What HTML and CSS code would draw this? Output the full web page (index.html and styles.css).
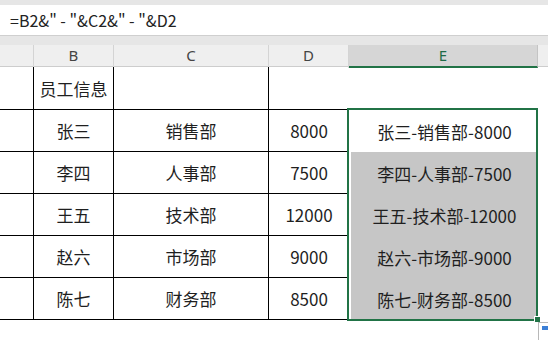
FILE: index.html
```html
<!DOCTYPE html>
<html lang="zh-CN">
<head>
<meta charset="utf-8">
<link rel="stylesheet" href="styles.css">
</head>
<body>
<div class="app">
  <div class="topband"></div>
  <div class="formula">=B2&amp;" - "&amp;C2&amp;" - "&amp;D2</div>
  <div class="gap"></div>
  <div class="colhead">
    <div class="ch"></div>
    <div class="ch">B</div>
    <div class="ch">C</div>
    <div class="ch">D</div>
    <div class="ch ch-sel">E</div>
    <div class="ch ch-last"></div>
  </div>
  <div class="sheet">
    <div class="c b"></div><div class="c b">员工信息</div><div class="c b"></div><div class="c bl"></div><div class="c"></div><div class="c"></div>
    <div class="c b"></div><div class="c b">张三</div><div class="c b">销售部</div><div class="c bl">8000</div><div class="c e">张三-销售部-8000</div><div class="c"></div>
    <div class="c b"></div><div class="c b">李四</div><div class="c b">人事部</div><div class="c bl">7500</div><div class="c e g">李四-人事部-7500</div><div class="c"></div>
    <div class="c b"></div><div class="c b">王五</div><div class="c b">技术部</div><div class="c bl">12000</div><div class="c e g">王五-技术部-12000</div><div class="c"></div>
    <div class="c b"></div><div class="c b">赵六</div><div class="c b">市场部</div><div class="c bl">9000</div><div class="c e g">赵六-市场部-9000</div><div class="c"></div>
    <div class="c b"></div><div class="c b">陈七</div><div class="c b">财务部</div><div class="c bl">8500</div><div class="c e g">陈七-财务部-8500</div><div class="c"></div>
    <div class="selection"></div>
    <div class="handle"></div>
    <div class="quick"><span class="qbar"></span></div>
  </div>
</div>
</body>
</html>
```

FILE: styles.css
```css
* { box-sizing: border-box; }
html, body { margin: 0; padding: 0; background: #fff; }
body { width: 548px; height: 340px; overflow: hidden; font-family: "Noto Sans CJK SC", "Noto Sans", sans-serif; color: #1f1f1f; }
.app { width: 548px; }
.topband { height: 5px; background: #e6e6e6; }
.formula { height: 31px; line-height: 30px; padding-left: 10px; font-size: 16px; background: #fff; border-bottom: 1px solid #cfcfcf; color: #222; }
.gap { height: 9px; background: #e6e6e6; }
.colhead { display: grid; grid-template-columns: 34px 80px 155px 80px 189px 1fr; height: 22px; background: #efefef; border-bottom: 1px solid #cdcdcd; }
.ch { border-right: 1px solid #d4d4d4; text-align: center; font-size: 15px; line-height: 21px; color: #444; font-family: "Noto Sans", "Liberation Sans", sans-serif; }
.ch-sel { background: #d6d6d6; color: #1e6b47; border-bottom: 2px solid #217346; border-right-color: #c4c4c4; }
.ch-last { border-right: none; }
.sheet { position: relative; display: grid; grid-template-columns: 34px 80px 155px 80px 189px 1fr; grid-template-rows: 43px repeat(5, 42px); }
.c { display: flex; align-items: center; justify-content: center; font-size: 17px; white-space: nowrap; }
.b { border-right: 1px solid #000; border-bottom: 1px solid #000; }
.bl { border-bottom: 1px solid #000; }
.e { margin-left: 2px; }
.g { background: #c6c6c6; }
.selection { position: absolute; left: 347px; top: 41px; width: 191px; height: 213px; border: 2px solid #217346; pointer-events: none; }
.handle { position: absolute; left: 534px; top: 249px; width: 7px; height: 7px; background: #217346; border: 1px solid #fff; }
.quick { position: absolute; left: 538px; top: 255px; width: 14px; height: 20px; background: #fff; border: 1px solid #b8b8b8; padding: 3px 0 0 3px; }
.qbar { display: block; width: 10px; height: 4px; background: #3b7fd6; }
```
